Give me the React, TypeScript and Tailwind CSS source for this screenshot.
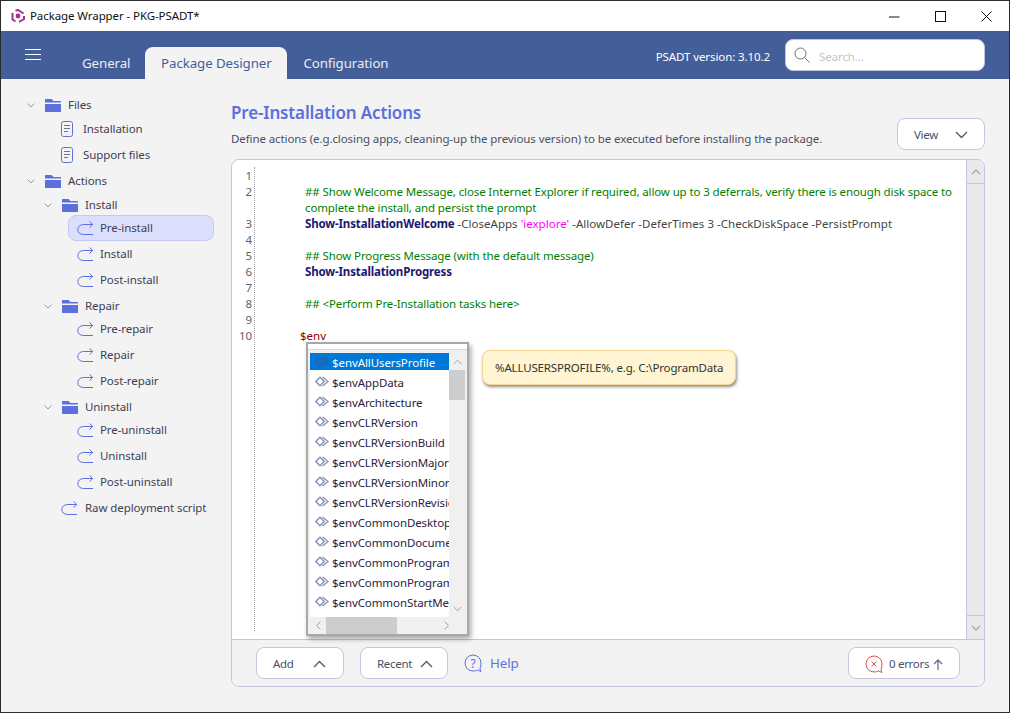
const F = "font-['Noto_Sans','Open_Sans',sans-serif] tracking-[-0.09px]";

function Folder() {
  return (
    <svg width="16" height="13" viewBox="0 0 16 13" className="shrink-0">
      <path d="M0 0.5C0 0.2 0.2 0 0.5 0H6.5L8.5 2H15.5C15.8 2 16 2.2 16 2.5V3.5H0Z" fill="#5c6fdc" />
      <path d="M0 5H16V12.5C16 12.8 15.8 13 15.5 13H0.5C0.2 13 0 12.8 0 12.5Z" fill="#5c6fdc" />
    </svg>
  );
}
function Doc() {
  return (
    <svg width="12" height="16" viewBox="0 0 12 16" fill="none" className="shrink-0">
      <rect x="0.5" y="0.5" width="11" height="15" rx="2" stroke="#5c6fdc" />
      <path d="M3 4.5H9M3 7.5H9M3 10.5H7" stroke="#6b7390" />
    </svg>
  );
}
function Ret() {
  return (
    <svg width="17" height="14" viewBox="0 0 17 14" fill="none" className="shrink-0">
      <path d="M16 13.5H6.5C3 13.5 0.8 11.3 0.8 8.7C0.8 6 3 3.5 6.5 3.5H15.5" stroke="#5c6fdc" />
      <path d="M12.5 0.5L15.7 3.5L12.5 6.5" stroke="#5c6fdc" />
    </svg>
  );
}
function Chev({ up = false, c = "#555a70", w = 13 }: { up?: boolean; c?: string; w?: number }) {
  return (
    <svg width={w} height="8" viewBox="0 0 13 8" fill="none" className="shrink-0">
      <path d={up ? "M1 7L6.5 1.5L12 7" : "M1 1L6.5 6.5L12 1"} stroke={c} strokeWidth="1.4" />
    </svg>
  );
}
function FolderRow({ label, pl, cls = "" }: { label: string; pl: string; cls?: string }) {
  return (
    <div className={`flex items-center h-5 ${pl} ${cls}`}>
      <svg width="8" height="5" viewBox="0 0 8 5" fill="none" className="shrink-0">
        <path d="M0.5 0.5L4 4L7.5 0.5" stroke="#9a9aa5" />
      </svg>
      <div className="ml-[10px] flex items-center">
        <Folder />
      </div>
      <span className="ml-[7px]">{label}</span>
    </div>
  );
}
function Leaf({ label, active = false }: { label: string; active?: boolean }) {
  return (
    <div
      className={`h-[26px] ml-[67px] w-[146px] pl-2 flex items-center rounded-lg border ${active ? "bg-[#dcdffb] border-[#c6c9ef]" : "border-transparent"}`}
    >
      <Ret />
      <span className="ml-[6px]">{label}</span>
    </div>
  );
}
function DocRow({ label }: { label: string }) {
  return (
    <div className="h-[26px] pl-[60px] flex items-center">
      <Doc />
      <span className="ml-[10px]">{label}</span>
    </div>
  );
}
function Sidebar() {
  return (
    <div className="w-[230px] shrink-0 pt-4 text-[11.5px] text-[#3c3f55]">
      <FolderRow label="Files" pl="pl-[26px]" cls="mb-px" />
      <DocRow label="Installation" />
      <DocRow label="Support files" />
      <FolderRow label="Actions" pl="pl-[26px]" cls="mt-[3px] mb-1" />
      <FolderRow label="Install" pl="pl-[43px]" />
      <Leaf label="Pre-install" active />
      <Leaf label="Install" />
      <Leaf label="Post-install" />
      <FolderRow label="Repair" pl="pl-[43px]" cls="mt-[3px]" />
      <Leaf label="Pre-repair" />
      <Leaf label="Repair" />
      <Leaf label="Post-repair" />
      <FolderRow label="Uninstall" pl="pl-[43px]" cls="mt-[3px]" />
      <Leaf label="Pre-uninstall" />
      <Leaf label="Uninstall" />
      <Leaf label="Post-uninstall" />
      <div className="h-[26px] pl-[60px] flex items-center">
        <Ret />
        <span className="ml-[7px]">Raw deployment script</span>
      </div>
    </div>
  );
}
function MethodIcon({ dark = false }: { dark?: boolean }) {
  const c = dark ? "#2f5f9f" : "#8a8fb8";
  return (
    <svg width="14" height="11" viewBox="0 0 14 11" fill="none" className="shrink-0 -mt-[3px]">
      <path d="M5 1.2L9.2 5.5L5 9.8L0.8 5.5Z" stroke={c} strokeWidth="1.5" fill={dark ? "#0078d7" : "#ffffff"} />
      <path d="M7.5 1L13 5.5L7.5 10" stroke={c} strokeWidth="1.4" />
    </svg>
  );
}
const ITEMS = [
  "$envAllUsersProfile",
  "$envAppData",
  "$envArchitecture",
  "$envCLRVersion",
  "$envCLRVersionBuild",
  "$envCLRVersionMajor",
  "$envCLRVersionMinor",
  "$envCLRVersionRevision",
  "$envCommonDesktop",
  "$envCommonDocuments",
  "$envCommonPrograms",
  "$envCommonProgramsX86",
  "$envCommonStartMenu",
];
function Popup() {
  return (
    <div className="absolute left-[74px] top-[182px] w-[163px] h-[294px] bg-white border-2 border-[#a8a8a8] shadow-[2px_3px_5px_rgba(0,0,0,0.35)] flex flex-col">
      <div className="h-[6px] shrink-0 border-b border-[#d8d8d8]" />
      <div className="flex-1 bg-[#f0f0f0] px-[2px] pt-[3px] flex flex-col min-h-0">
        <div className="flex flex-1 min-h-0">
          <div className="w-[139px] h-[264px] bg-white overflow-hidden shrink-0">
            {ITEMS.map((t, i) => (
              <div
                key={t}
                className={`flex items-center pl-[5px] whitespace-nowrap ${i === 0 ? "bg-[#0078d7] text-white h-[17px] mb-[3px] pt-[3px]" : "h-5 text-[#2a2440]"}`}
              >
                <MethodIcon dark={i === 0} />
                <span className="ml-[3px]">{t}</span>
              </div>
            ))}
          </div>
          <div className="w-[17px] flex flex-col bg-[#f0f0f0]">
            <div className="h-[17px] flex items-center justify-center">
              <Chev up c="#a0a0a0" w={9} />
            </div>
            <div className="h-[30px] bg-[#cdcdcd]" />
            <div className="flex-1" />
            <div className="h-[17px] flex items-center justify-center">
              <Chev c="#a0a0a0" w={9} />
            </div>
          </div>
        </div>
        <div className="h-[17px] flex items-center shrink-0">
          <div className="w-4 flex justify-center">
            <svg width="5" height="9" viewBox="0 0 5 9" fill="none"><path d="M4.5 0.5L0.5 4.5L4.5 8.5" stroke="#a0a0a0" /></svg>
          </div>
          <div className="w-[71px] h-full bg-[#cdcdcd]" />
          <div className="flex-1" />
          <div className="w-[29px] flex justify-start pl-[8px]">
            <svg width="5" height="9" viewBox="0 0 5 9" fill="none"><path d="M0.5 0.5L4.5 4.5L0.5 8.5" stroke="#a0a0a0" /></svg>
          </div>
        </div>
      </div>
    </div>
  );
}
function Code() {
  const nums = ["1", "2", "", "3", "4", "5", "6", "7", "8", "9", "10"];
  const green = "text-[#008000] tracking-[-0.12px]";
  const bold = "font-bold text-[#191970] tracking-[-0.15px]";
  return (
    <div className="flex-1 relative bg-white min-h-0 flex text-[11.5px] leading-4">
      <div className="w-[23px] shrink-0 mt-[7px] mb-2 pt-px text-right text-[#5f5f5f] border-r border-dotted border-[#a0a0a0] pr-[2px]">
        {nums.map((n, i) => (
          <div key={i} className="h-4">{n}</div>
        ))}
      </div>
      <div className="flex-1 min-w-0 overflow-hidden pt-2 pl-[50px] whitespace-nowrap text-[#444] tracking-[0.02px]">
        <div className="h-4" />
        <div className={green}>## Show Welcome Message, close Internet Explorer if required, allow up to 3 deferrals, verify there is enough disk space to</div>
        <div className={green}>complete the install, and persist the prompt</div>
        <div>
          <span className={bold}>Show-InstallationWelcome</span> -CloseApps <span className="text-[#ff00ff]">'iexplore'</span> -AllowDefer -DeferTimes 3 -CheckDiskSpace -PersistPrompt
        </div>
        <div className="h-4" />
        <div className={green}>## Show Progress Message (with the default message)</div>
        <div className={bold}>Show-InstallationProgress</div>
        <div className="h-4" />
        <div className={green}>## &lt;Perform Pre-Installation tasks here&gt;</div>
        <div className="h-4" />
        <div className="ml-[-5px] text-[#8b0000]">$env</div>
      </div>
      <div className="w-[18px] shrink-0 bg-[#e9e9e9] border-l border-[#c5c5e0] flex flex-col">
        <div className="h-6 flex items-center justify-center border-b border-[#c5c5e0]">
          <Chev up c="#a0a0a0" w={10} />
        </div>
        <div className="flex-1" />
        <div className="h-6 flex items-center justify-center border-t border-[#c5c5e0]">
          <Chev c="#a0a0a0" w={10} />
        </div>
      </div>
      <Popup />
      <div className="absolute left-[250px] top-[190px] w-[254px] h-[35px] rounded-lg bg-[#fff5d2] border border-[#f2d78c] shadow-[1px_2px_3px_rgba(0,0,0,0.45)] flex items-center pl-[12px] text-[#333] whitespace-nowrap tracking-[-0.16px]">
        %ALLUSERSPROFILE%, e.g. C:\ProgramData
      </div>
    </div>
  );
}
function Btn({ children, cls }: { children: React.ReactNode; cls: string }) {
  return (
    <div className={`h-8 pt-[2px] bg-white border border-[#c5c5e0] rounded-lg flex items-center text-[11.5px] tracking-[-0.3px] text-[#4b4f66] ${cls}`}>
      {children}
    </div>
  );
}
function Bubble({ c, children }: { c: string; children: React.ReactNode }) {
  return (
    <svg width="19" height="19" viewBox="0 0 19 19" fill="none" className="shrink-0">
      <path d="M9 1A8 8 0 1 0 9 17C11 17 12.5 16.5 13.5 16L17 17.5L16 14.5C16.8 13 17 11 17 9A8 8 0 0 0 9 1Z" stroke={c} />
      {children}
    </svg>
  );
}
export default function App() {
  return (
    <div className={`w-[1010px] h-[713px] border border-[#2b2b2b] bg-[#f3f3f3] flex flex-col overflow-hidden ${F}`}>
      <div className="h-[30px] shrink-0 bg-white flex items-center">
        <svg width="14" height="14" viewBox="0 0 14 14" fill="none" className="ml-[10px]">
          <path d="M4.5 1.5L7 1L12.5 4.5" stroke="#a3308f" strokeWidth="2" />
          <path d="M13 7V10L8 13" stroke="#a3308f" strokeWidth="2" />
          <path d="M4.5 12.5L1.5 10.5V4" stroke="#a3308f" strokeWidth="2" />
          <circle cx="7" cy="7" r="2.4" fill="#a3308f" />
        </svg>
        <span className="ml-[5px] text-[11.5px] text-[#111]">Package Wrapper - PKG-PSADT*</span>
        <div className="ml-auto flex items-center text-black">
          <div className="w-[46px] flex justify-center">
            <svg width="11" height="11" viewBox="0 0 11 11"><path d="M0 6H10.5" stroke="#111" /></svg>
          </div>
          <div className="w-[46px] flex justify-center">
            <svg width="11" height="11" viewBox="0 0 11 11" fill="none"><rect x="0.5" y="0.5" width="10" height="10" stroke="#111" /></svg>
          </div>
          <div className="w-[46px] flex justify-center">
            <svg width="11" height="11" viewBox="0 0 11 11" fill="none"><path d="M0.5 0.5L10.5 10.5M10.5 0.5L0.5 10.5" stroke="#111" /></svg>
          </div>
        </div>
      </div>
      <div className="h-12 shrink-0 bg-[#445e9a] flex items-end text-white">
        <div className="self-start mt-[18px] ml-6 w-4 flex flex-col gap-[4px]">
          <div className="h-px bg-white" />
          <div className="h-px bg-white" />
          <div className="h-px bg-white" />
        </div>
        <div className="ml-[41px] h-[32px] pt-[2px] flex items-center text-[13.3px] text-[#e8ecf5]">General</div>
        <div className="ml-[15px] w-[142px] h-[32px] pt-[2px] rounded-t-lg bg-[#f3f3f3] flex items-center justify-center text-[13.3px] text-[#445e9a]">Package Designer</div>
        <div className="ml-4 h-[32px] pt-[2px] flex items-center text-[13.3px] text-[#e8ecf5]">Configuration</div>
        <div className="ml-auto self-center flex items-center pr-6">
          <span className="text-[11.5px] mr-[15px] mt-[4px]">PSADT version: 3.10.2</span>
          <div className="w-[200px] h-8 rounded-lg bg-white border border-[#c5c5e0] flex items-center pl-2">
            <svg width="16" height="16" viewBox="0 0 16 16" fill="none">
              <circle cx="6.5" cy="6.5" r="5.5" stroke="#6b6f80" />
              <path d="M10.5 10.5L15.5 15.5" stroke="#6b6f80" />
            </svg>
            <span className="ml-[9px] mt-[3px] text-[11.5px] text-[#c4c4c4]">Search...</span>
          </div>
        </div>
      </div>
      <div className="flex-1 flex min-h-0">
        <Sidebar />
        <div className="flex-1 min-w-0 flex flex-col pr-6 pb-[25px]">
          <div className="h-[80px] shrink-0 relative">
            <div className="pt-[22px] text-[17px] leading-6 font-semibold tracking-[-0.15px] text-[#5c6fdc]">Pre-Installation Actions</div>
            <div className="mt-[6px] text-[11.5px] leading-4 text-[#4b4f66]">Define actions (e.g.closing apps, cleaning-up the previous version) to be executed before installing the package.</div>
            <Btn cls="absolute right-0 top-[39px] w-[88px] pl-[16px] justify-between pr-4">
              <span>View</span>
              <Chev />
            </Btn>
          </div>
          <div className="flex-1 min-h-0 border border-[#c5c5e0] rounded-lg overflow-hidden flex flex-col">
            <Code />
            <div className="h-[47px] shrink-0 border-t border-[#c5c5e0] bg-[#f3f3f3] flex items-center pl-6 pr-6">
              <Btn cls="w-[88px] justify-between pl-4 pr-[17px]">
                <span>Add</span>
                <Chev up />
              </Btn>
              <Btn cls="ml-4 w-[88px] justify-between pl-4 pr-[14px]">
                <span>Recent</span>
                <Chev up />
              </Btn>
              <div className="ml-4 flex items-center">
                <Bubble c="#5c6fdc">
                  <text x="9" y="13.5" textAnchor="middle" fontSize="12" fill="#5c6fdc">?</text>
                </Bubble>
                <span className="ml-[7px] mt-[2px] text-[13.3px] text-[#5c6fdc]">Help</span>
              </div>
              <Btn cls="ml-auto w-[112px] pl-4">
                <Bubble c="#e05050">
                  <path d="M6.5 6.5L11.5 11.5M11.5 6.5L6.5 11.5" stroke="#e05050" />
                </Bubble>
                <span className="ml-[5px]">0 errors</span>
                <svg width="10" height="11" viewBox="0 0 10 11" fill="none" className="ml-[4px]">
                  <path d="M5 11V1M1 5L5 1L9 5" stroke="#6b6f80" strokeWidth="1.3" />
                </svg>
              </Btn>
            </div>
          </div>
        </div>
      </div>
    </div>
  );
}
